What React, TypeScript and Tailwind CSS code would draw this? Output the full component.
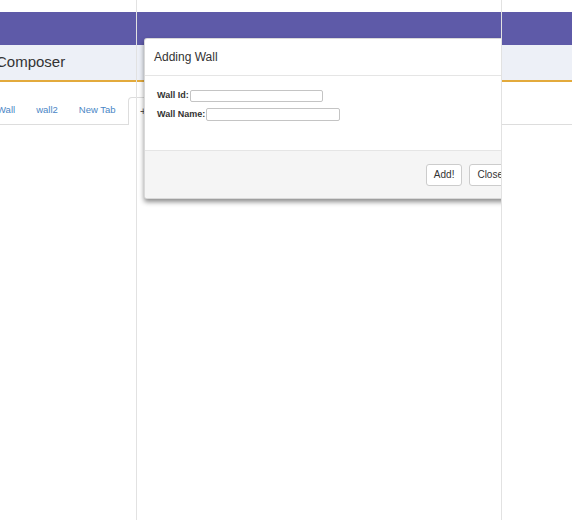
import React from 'react';

const tabs = ['Wall', 'wall2', 'New Tab'];

export default function App() {
    return (
        <div className="relative h-[520px] overflow-hidden bg-white font-['Liberation_Sans',Arial,sans-serif]">
            <div className="h-3" />
            <div className="h-[33px] bg-[#5e5aa8]" />
            <div className="h-[37px] bg-[#edf0f7] border-b-2 border-[#e3aa3c] flex items-center">
                <span className="ml-[-4px] text-[15px] text-[#333]">Composer</span>
            </div>

            {/* tabs */}
            <div className="pt-[15px] border-b border-[#dddddd]">
                <div className="flex h-[27px] ml-[-13.5px]">
                    {tabs.map(t => (
                        <div key={t} className="px-[10.5px] flex items-center text-[9.5px] text-[#4a86c6]">
                            {t}
                        </div>
                    ))}
                    <div className="ml-[2px] px-[11px] flex items-center text-[11px] text-[#555] bg-white border border-[#dddddd] border-b-0 rounded-t-[4px] mb-[-1px] h-[28px]">
                        +
                    </div>
                </div>
            </div>

            {/* dialog frame */}
            <div className="absolute left-[136px] top-0 w-[366px] h-full border-x border-[#e2e2e2] overflow-hidden">
                <div className="absolute left-[7px] top-[38px] w-[376px] bg-white rounded-[3px] border border-black/15 shadow-[0_3px_5px_rgba(0,0,0,0.45)]">
                    <div className="h-[37px] px-[9px] flex items-center border-b border-[#e5e5e5] text-[12px] text-[#333]">
                        Adding Wall
                    </div>
                    <div className="h-[74px] pl-[12px] pt-[14px] flex flex-col gap-[6px] text-[9px] font-bold text-[#333]">
                        <div className="flex items-center h-[12px]">
                            <span>Wall Id:</span>
                            <div className="ml-px w-[133px] h-[12px] border border-[#c4c4c4] rounded-[2px] bg-white" />
                        </div>
                        <div className="flex items-center h-[13px]">
                            <span>Wall Name:</span>
                            <div className="ml-px w-[134px] h-[13px] border border-[#c4c4c4] rounded-[2px] bg-white" />
                        </div>
                    </div>
                    <div className="h-[48px] border-t border-[#e5e5e5] bg-[#f5f5f5] rounded-b-[3px] flex items-center justify-end gap-[7px] pr-[8px]">
                        <button className="h-[22px] px-[7px] text-[10px] text-[#333] bg-white border border-[#cccccc] rounded-[3px]">
                            Add!
                        </button>
                        <button className="h-[22px] px-[7px] text-[10px] text-[#333] bg-white border border-[#cccccc] rounded-[3px]">
                            Close
                        </button>
                    </div>
                </div>
            </div>
        </div>
    );
}
